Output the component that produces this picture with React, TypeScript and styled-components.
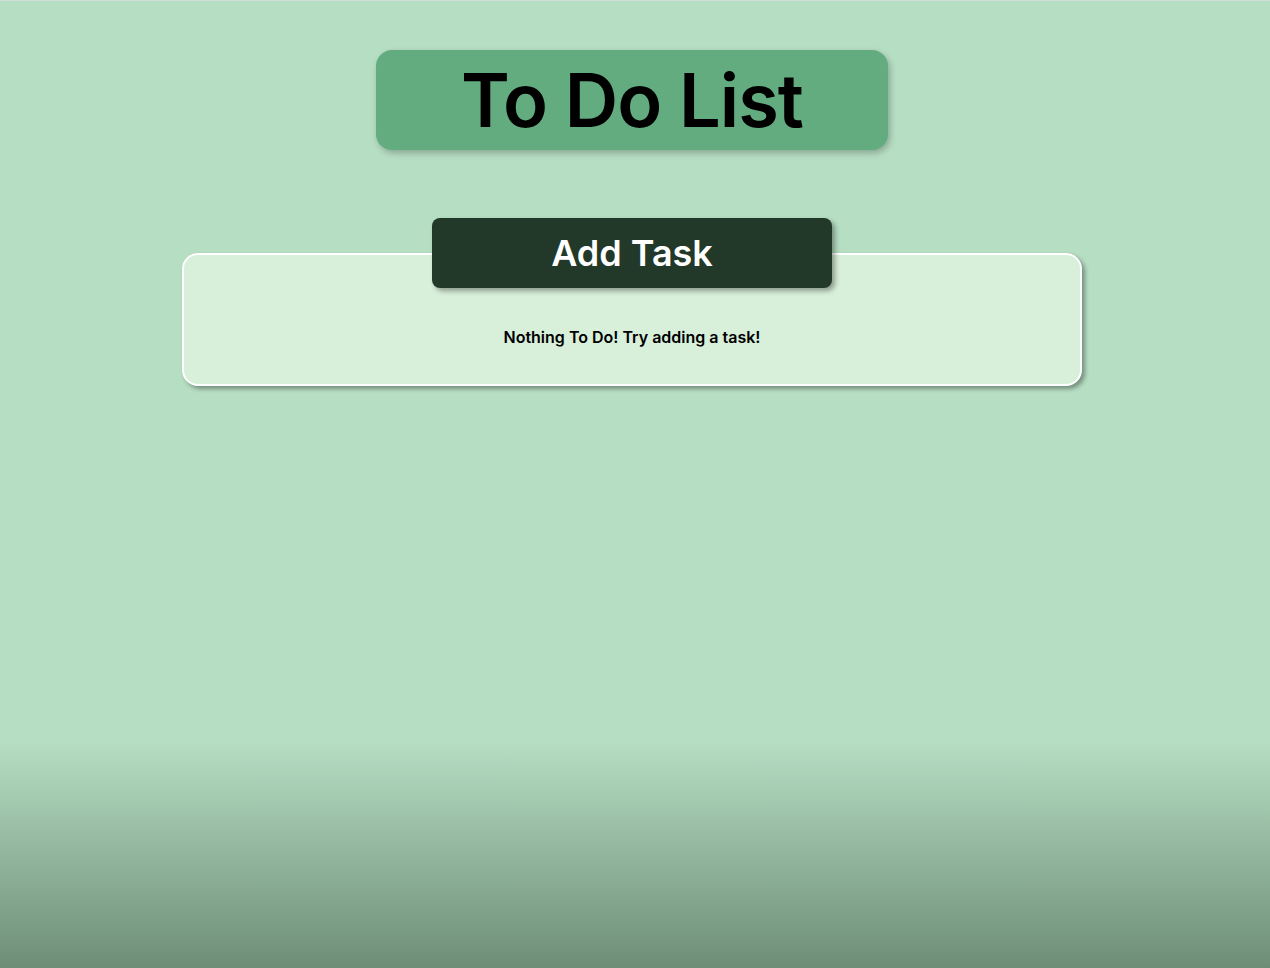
import React from "react";
import styled, { createGlobalStyle } from "styled-components";

const Global = createGlobalStyle`
  html, body { margin: 0; padding: 0; }
  body { font-family: Inter, "Noto Sans", sans-serif; }
`;

const Page = styled.div`
  min-height: 968px;
  box-sizing: border-box;
  padding-right: 6px;
  border-top: 1px solid #d2dbd5;
  background: linear-gradient(to bottom, #b6dec3 0px, #b6dec3 740px, #6e8d77 968px);
  display: flex;
  flex-direction: column;
  align-items: center;
`;

const TitleBox = styled.h1`
  margin: 49px 0 0;
  width: 512px;
  height: 100px;
  box-sizing: border-box;
  border-radius: 16px;
  background: #62ac80;
  box-shadow: 2px 3px 6px rgba(0, 0, 0, 0.25);
  display: flex;
  align-items: center;
  justify-content: center;
  font-size: 74px;
  font-weight: 600;
  color: #000;
  letter-spacing: -1px;
  line-height: 1;
`;

const Section = styled.section`
  margin-top: 68px;
  width: 900px;
  display: flex;
  flex-direction: column;
  align-items: center;
`;

const SectionHeader = styled.h2`
  margin: 0;
  position: relative;
  z-index: 1;
  width: 400px;
  height: 70px;
  border-radius: 8px;
  background: #223829;
  color: #fff;
  font-size: 36px;
  font-weight: 600;
  display: flex;
  align-items: center;
  justify-content: center;
  box-shadow: 3px 3px 5px rgba(0, 0, 0, 0.35);
`;

const Card = styled.div`
  margin-top: -35px;
  width: 900px;
  height: 133px;
  box-sizing: border-box;
  border: 2px solid #ffffff;
  border-radius: 16px;
  background: #d8efd9;
  box-shadow: 3px 3px 4px rgba(0, 0, 0, 0.35);
  display: flex;
  align-items: flex-start;
  justify-content: center;
  padding-top: 72px;
`;

const EmptyText = styled.p`
  margin: 0;
  font-size: 16px;
  font-weight: 600;
  color: #000;
  line-height: 20px;
`;

export default function App() {
  return (
    <>
      <Global />
      <Page>
        <TitleBox>To Do List</TitleBox>
        <Section>
          <SectionHeader>Add Task</SectionHeader>
          <Card>
            <EmptyText>Nothing To Do! Try adding a task!</EmptyText>
          </Card>
        </Section>
      </Page>
    </>
  );
}
